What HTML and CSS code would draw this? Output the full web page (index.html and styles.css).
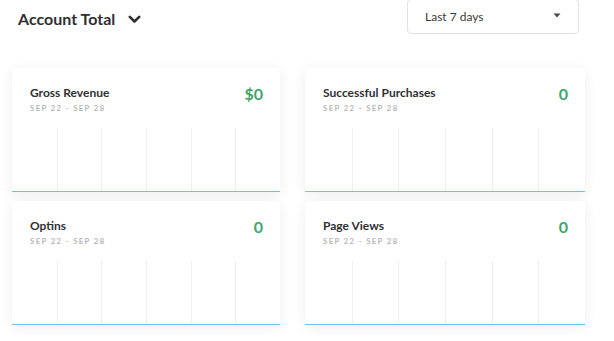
FILE: index.html
```html
<!DOCTYPE html>
<html>
<head>
<meta charset="utf-8">
<link rel="stylesheet" href="styles.css">
</head>
<body>
<div class="page">
  <header class="header">
    <div class="title">
      <span>Account Total</span>
      <svg class="chev" width="13" height="9" viewBox="0 0 13 9"><path d="M1.8 1.8 L6.5 6.5 L11.2 1.8" fill="none" stroke="#2f3033" stroke-width="2.6" stroke-linecap="round" stroke-linejoin="round"/></svg>
    </div>
    <div class="select">
      <span>Last 7 days</span>
      <svg class="caret" width="8" height="5" viewBox="0 0 8 5"><path d="M0.5 0.5 H7.5 L4 4.5 Z" fill="#4a4a4a"/></svg>
    </div>
  </header>
  <div class="grid">
    <div class="card">
      <div class="card-head">
        <div>
          <div class="card-title">Gross Revenue</div>
          <div class="card-date">SEP 22 - SEP 28</div>
        </div>
        <div class="card-value">$0</div>
      </div>
      <div class="chart"><i></i><i></i><i></i><i></i><i></i><i></i></div>
    </div>
    <div class="card">
      <div class="card-head">
        <div>
          <div class="card-title">Successful Purchases</div>
          <div class="card-date">SEP 22 - SEP 28</div>
        </div>
        <div class="card-value">0</div>
      </div>
      <div class="chart"><i></i><i></i><i></i><i></i><i></i><i></i></div>
    </div>
    <div class="card">
      <div class="card-head">
        <div>
          <div class="card-title">Optins</div>
          <div class="card-date">SEP 22 - SEP 28</div>
        </div>
        <div class="card-value">0</div>
      </div>
      <div class="chart"><i></i><i></i><i></i><i></i><i></i><i></i></div>
    </div>
    <div class="card">
      <div class="card-head">
        <div>
          <div class="card-title">Page Views</div>
          <div class="card-date">SEP 22 - SEP 28</div>
        </div>
        <div class="card-value">0</div>
      </div>
      <div class="chart"><i></i><i></i><i></i><i></i><i></i><i></i></div>
    </div>
  </div>
</div>
</body>
</html>
```

FILE: styles.css
```css
html, body {
  margin: 0;
  padding: 0;
  background: #ffffff;
}
body {
  font-family: Lato, "Open Sans", sans-serif;
  color: #2f3033;
  overflow: hidden;
}
.page {
  padding-left: 12px;
  width: 602px;
  height: 341px;
}
.header {
  display: flex;
  align-items: flex-start;
  margin-top: -1px;
  height: 36px;
}
.title {
  display: flex;
  align-items: center;
  gap: 13px;
  margin-left: 6px;
  margin-top: 10px;
  font-size: 16px;
  font-weight: 700;
  line-height: 20px;
}
.chev {
  display: block;
  margin-top: 1px;
}
.select {
  margin-left: auto;
  margin-right: 35px;
  width: 172px;
  height: 35px;
  box-sizing: border-box;
  border: 1px solid #e2e2e2;
  border-radius: 4px;
  display: flex;
  align-items: center;
  justify-content: space-between;
  padding: 0 17px 0 17px;
  font-size: 12px;
  color: #3a3a3a;
}
.caret {
  display: block;
  margin-top: -2px;
}
.grid {
  display: grid;
  grid-template-columns: 268px 280px;
  column-gap: 25px;
  row-gap: 9px;
  margin-top: 33px;
}
.card {
  background: #fff;
  border-radius: 4px 4px 0 0;
  box-shadow: 0 2px 14px rgba(0, 0, 0, 0.07);
  height: 124px;
  box-sizing: border-box;
  display: flex;
  flex-direction: column;
}
.card-head {
  display: flex;
  justify-content: space-between;
  align-items: flex-start;
  padding: 17px 17px 0 18px;
}
.card-title {
  font-size: 12px;
  font-weight: 700;
  line-height: 16px;
  color: #2f3033;
}
.card-date {
  margin-top: 2px;
  font-size: 7.8px;
  font-weight: 700;
  letter-spacing: 1.35px;
  line-height: 10px;
  color: #b7b7b7;
}
.card-value {
  font-size: 16px;
  font-weight: 700;
  line-height: 18px;
  color: #3ca66a;
  margin-top: 0px;
}
.chart {
  margin-top: auto;
  height: 63px;
  display: grid;
  grid-template-columns: repeat(6, 1fr);
  border-bottom: 1px solid #6cc3ec;
}
.chart i {
  border-left: 1px solid #efefef;
}
.chart i:first-child {
  border-left: none;
}
```
